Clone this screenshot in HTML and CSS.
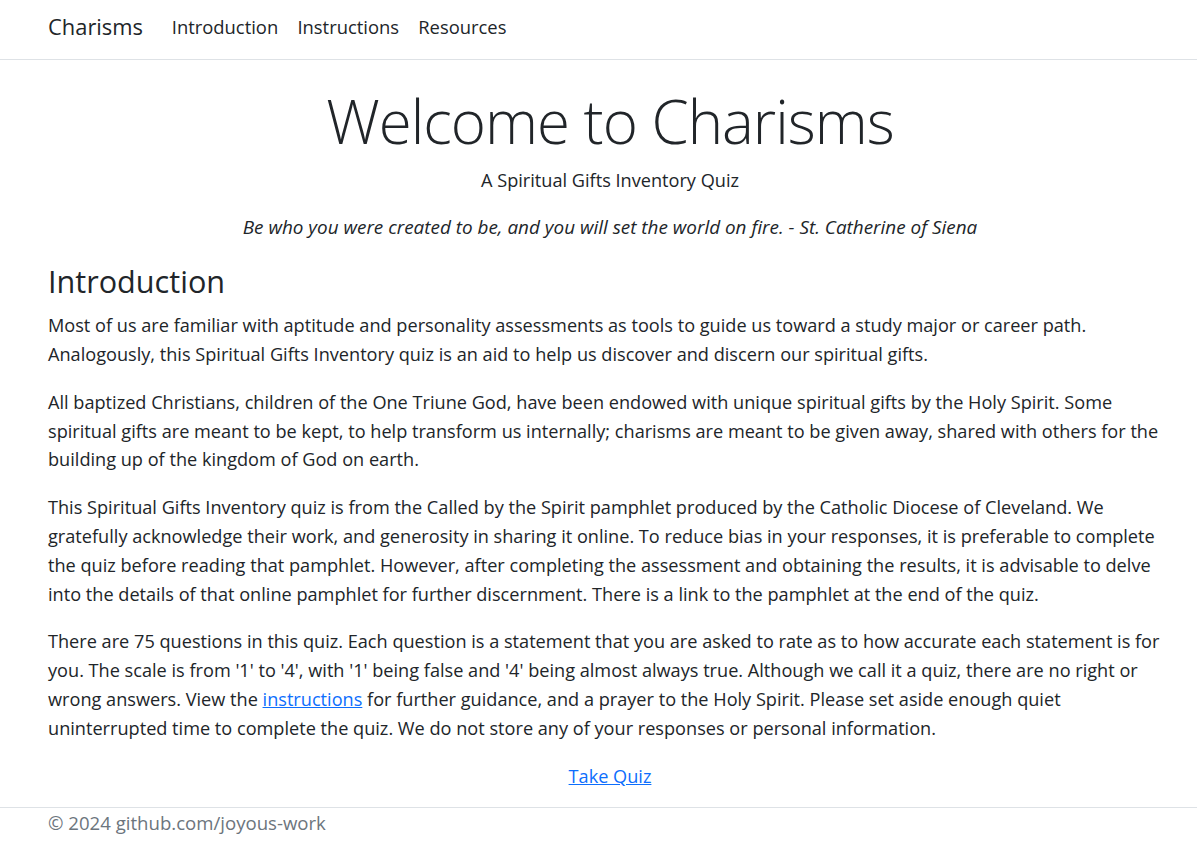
FILE: index.html
```html
<!DOCTYPE html>
<html lang="en">
<head>
<meta charset="utf-8">
<title>Charisms</title>
<link rel="stylesheet" href="styles.css">
</head>
<body>
<header class="navbar">
  <a class="brand" href="#">Charisms</a>
  <nav class="nav">
    <a class="nav-link" href="#">Introduction</a>
    <a class="nav-link" href="#">Instructions</a>
    <a class="nav-link" href="#">Resources</a>
  </nav>
</header>
<main class="container">
  <h1 class="display">Welcome to Charisms</h1>
  <p class="center">A Spiritual Gifts Inventory Quiz</p>
  <p class="center quote">Be who you were created to be, and you will set the world on fire. - St. Catherine of Siena</p>
  <h3 class="section-title">Introduction</h3>
  <p>Most of us are familiar with aptitude and personality assessments as tools to guide us toward a study major or career path. Analogously, this Spiritual Gifts Inventory quiz is an aid to help us discover and discern our spiritual gifts.</p>
  <p>All baptized Christians, children of the One Triune God, have been endowed with unique spiritual gifts by the Holy Spirit. Some spiritual gifts are meant to be kept, to help transform us internally; charisms are meant to be given away, shared with others for the building up of the kingdom of God on earth.</p>
  <p>This Spiritual Gifts Inventory quiz is from the Called by the Spirit pamphlet produced by the Catholic Diocese of Cleveland. We gratefully acknowledge their work, and generosity in sharing it online. To reduce bias in your responses, it is preferable to complete the quiz before reading that pamphlet. However, after completing the assessment and obtaining the results, it is advisable to delve into the details of that online pamphlet for further discernment. There is a link to the pamphlet at the end of the quiz.</p>
  <p>There are 75 questions in this quiz. Each question is a statement that you are asked to rate as to how accurate each statement is for you. The scale is from '1' to '4', with '1' being false and '4' being almost always true. Although we call it a quiz, there are no right or wrong answers. View the <a href="#">instructions</a> for further guidance, and a prayer to the Holy Spirit. Please set aside enough quiet uninterrupted time to complete the quiz. We do not store any of your responses or personal information.</p>
  <p class="center cta"><a href="#">Take Quiz</a></p>
</main>
<footer class="footer">
  <span>© 2024 github.com/joyous-work</span>
</footer>
</body>
</html>
```
FILE: styles.css
```css
html { font-size: 19.2px; }
body {
  margin: 0;
  font-family: "Open Sans", sans-serif;
  font-size: 18.15px;
  line-height: 28.8px;
  color: #212529;
  background: #fff;
}
a { color: #0d6efd; }
.navbar {
  display: flex;
  align-items: center;
  height: 54px;
  padding: 0 48px 5px;
  border-bottom: 1px solid #dee2e6;
}
.brand {
  font-size: 21.9px;
  color: #212529;
  text-decoration: none;
  margin-right: 19.2px;
}
.nav { display: flex; }
.nav-link {
  font-size: 18.4px;
  padding: 0 9.6px;
  color: #212529;
  text-decoration: none;
}
.container {
  padding: 21px 25px 0 48px;
}
.display {
  font-size: 60px;
  font-weight: 300;
  letter-spacing: -1px;
  line-height: 80.64px;
  margin: 0 0 4px;
  text-align: center;
}
p { margin: 0 0 19px; }
.center { text-align: center; }
.quote { font-style: italic; font-size: 18.9px; }
.cta { margin-bottom: 16.5px; }
.section-title {
  font-size: 30.6px;
  font-weight: 400;
  line-height: 40.32px;
  margin: 0 0 9.6px;
}
.footer {
  border-top: 1px solid #dee2e6;
  padding: 1px 48px 0;
  font-size: 18.6px;
  color: #6c757d;
}
```
